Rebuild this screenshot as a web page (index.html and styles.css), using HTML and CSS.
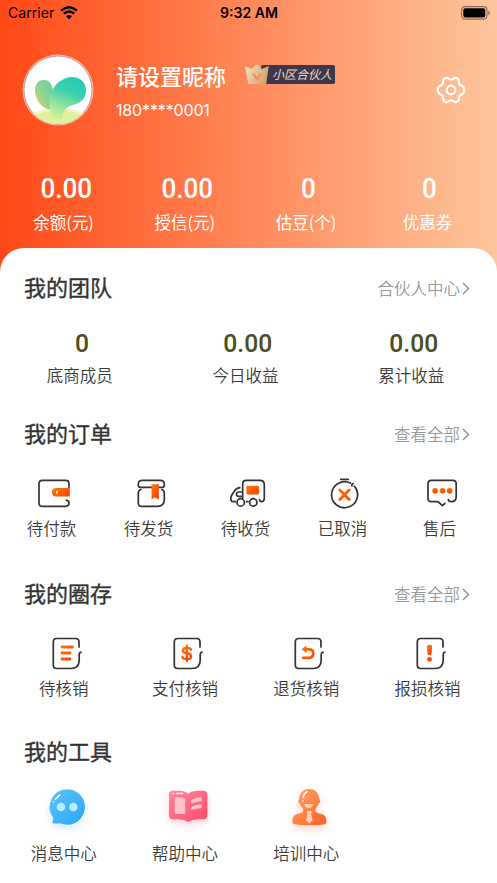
FILE: index.html
```html
<!DOCTYPE html>
<html lang="zh-CN">
<head>
<meta charset="utf-8">
<title>我的</title>
<link rel="stylesheet" href="styles.css">
</head>
<body>
<svg class="defs" width="0" height="0" aria-hidden="true">
  <defs>
    <linearGradient id="or" x1="0" y1="0" x2="1" y2="1"><stop offset="0" stop-color="#ff7a00"/><stop offset="1" stop-color="#ff3d00"/></linearGradient>
    <linearGradient id="oru" gradientUnits="userSpaceOnUse" x1="10" y1="10" x2="26" y2="27"><stop offset="0" stop-color="#ff7a00"/><stop offset="1" stop-color="#ff3d00"/></linearGradient>
    <path id="doc" class="ln" d="M31 12V7q0-3.500-3.500-3.500h-18.700Q5.300 3.500 5.300 7v23q0 3.500 3.500 3.500H23q8.200 0 8.200-8.200V19.500q0-2 1.800-2.400"/>
  </defs>
</svg>
<div class="screen">
  <header class="header">
    <div class="status">
      <div class="carrier"><span>Carrier</span>
        <svg width="18" height="14" viewBox="0 0 18 14" fill="none" stroke="#000" stroke-width="2.300"><path d="M1 4.600Q9-2.200 17 4.600"/><path d="M3.800 7.700Q9 3.400 14.200 7.700"/><path d="M9 13.400 6.100 10.300Q9 7.900 11.900 10.300Z" fill="#000" stroke="none"/></svg>
      </div>
      <div class="time">9:32 AM</div>
      <svg class="battery" width="29" height="14" viewBox="0 0 29 14"><rect x=".6" y=".6" width="25.400" height="12.500" rx="3.500" fill="none" stroke="#000" stroke-opacity=".45" stroke-width="1.100"/><rect x="2.300" y="2.300" width="22" height="9.100" rx="2" fill="#000"/><path d="M27.300 4.700q1.500.6 1.500 2.200t-1.500 2.200z" fill-opacity=".5"/></svg>
    </div>
    <div class="profile">
      <svg class="avatar" width="72" height="72" viewBox="0 0 72 72">
        <defs>
          <clipPath id="av"><circle cx="36" cy="36" r="34"/></clipPath>
          <linearGradient id="g1" x1="1" y1="0" x2="0" y2="1"><stop offset="0" stop-color="#61d2a2"/><stop offset=".5" stop-color="#8bd391"/><stop offset="1" stop-color="#f3d36b"/></linearGradient>
          <linearGradient id="g2" x1=".55" y1="0" x2=".2" y2="1"><stop offset="0" stop-color="#2accb6"/><stop offset=".3" stop-color="#38cfae"/><stop offset=".72" stop-color="#9de79a"/><stop offset="1" stop-color="#d2f299"/></linearGradient>
        </defs>
        <circle cx="36" cy="36" r="35.500" fill="#fff" fill-opacity=".55"/>
        <circle cx="36" cy="36" r="34" fill="#fff" stroke="#a893a8" stroke-width=".8"/>
        <g clip-path="url(#av)">
          <ellipse cx="36" cy="69" rx="35" ry="15" fill="#f4f4bd"/>
          <ellipse cx="36" cy="71" rx="29" ry="15" fill="#dff09e"/>
          <path d="M29 56C19 54 13 46 13 36c0-7 4-10 9-10 6 0 9 6 9 14z" fill="url(#g1)"/>
          <path d="M31 65C28.500 56 25 46 29 38.500 33 30 41 23 50 23c9 0 14 6 14 13 0 8-4 12.500-13 15-7 2-9.500 5-11 14z" fill="url(#g2)"/>
        </g>
      </svg>
      <div class="who">
        <div class="name-row">
          <span class="name">请设置昵称</span>
          <span class="badge">
            <svg width="24" height="21" viewBox="0 0 24 21"><defs><linearGradient id="gold" x1="0" y1="0" x2="1" y2=".4"><stop offset="0" stop-color="#f7e4c4"/><stop offset="1" stop-color="#d0a86c"/></linearGradient></defs><path d="M0 2.200 6.500 5 12 .3 17 5l6.700-3-2.500 18H3.200z" fill="url(#gold)"/><path d="m8.300 10 3.700 5 3.900-5" fill="none" stroke="#ff8a5f" stroke-width="2.400"/></svg>
            <span class="badge-text">小区合伙人</span>
          </span>
        </div>
        <div class="phone">180****0001</div>
      </div>
      <svg class="gear" width="30" height="28" viewBox="0 0 30 28" fill="none" stroke="#fff" stroke-width="2.200" stroke-linejoin="round"><path d="M9.500 2Q11 1.400 12.200 2.500 15 4.700 17.800 2.500 19 1.400 20.500 2 23 3 22.900 5.500 22.700 9 26 9.800 28 10.700 28.300 14 28 17.300 26 18.200 22.700 19 22.900 22.500 23 25 20.500 26 19 26.600 17.800 25.500 15 23.300 12.200 25.500 11 26.600 9.500 26 7 25 7.100 22.500 7.300 19 4 18.200 2 17.300 1.700 14 2 10.700 4 9.800 7.300 9 7.100 5.500 7 3 9.500 2Z"/><circle cx="15" cy="14" r="4.300"/></svg>
    </div>
    <div class="stats">
      <div class="cell"><b>0.00</b><span>余额(元)</span></div>
      <div class="cell"><b>0.00</b><span>授信(元)</span></div>
      <div class="cell"><b>0</b><span>估豆(个)</span></div>
      <div class="cell"><b>0</b><span>优惠券</span></div>
    </div>
  </header>

  <main class="sheet">
    <section class="team">
      <div class="head"><h2>我的团队</h2><a>合伙人中心<svg width="8" height="13" viewBox="0 0 8 13"><path d="m1 1 5.500 5.500L1 12"/></svg></a></div>
      <div class="row three">
        <div class="cell"><b>0</b><span>底商成员</span></div>
        <div class="cell"><b>0.00</b><span>今日收益</span></div>
        <div class="cell"><b>0.00</b><span>累计收益</span></div>
      </div>
    </section>

    <section class="orders">
      <div class="head"><h2>我的订单</h2><a>查看全部<svg width="8" height="13" viewBox="0 0 8 13"><path d="m1 1 5.500 5.500L1 12"/></svg></a></div>
      <div class="row five">
        <div class="cell"><svg class="ic" viewBox="0 0 36 36"><path class="ln" d="M30.200 25.200q2.800.3 2.800 3.100t-3.400 3.100H6.400Q3 31.400 3 28V8.800q0-3.400 3.400-3.400h23.200q3.400 0 3.400 3.400v3.500"/><path d="M33.800 13v8.400H20a4.200 4.200 0 0 1 0-8.400z" fill="url(#or)"/><rect x="20" y="15.700" width="1.900" height="3.200" rx=".9" fill="#fff"/></svg><span>待付款</span></div>
        <div class="cell"><svg class="ic" viewBox="0 0 36 36"><path class="ln" d="M18.500 12.300H7.300q-2 0-2-2V9.400q0-4 4-4h18q4 0 4 4v.9q0 2-2 2H26M8 14.500q-2.700.5-2.700 3.500v10q0 3.400 3.400 3.400h15.800q6.800 0 6.800-6.800V18q0-3-2.600-3.500"/><path d="M18.500 9.200h7.400v15.300l-3.700-2.100-3.700 2.100z" fill="url(#or)"/></svg><span>待发货</span></div>
        <div class="cell"><svg class="ic" viewBox="0 0 36 36"><path class="ln" d="M16.500 26.700h1.500M12.700 23V8.800q0-3.400 3.400-3.400h13.800q4.400 0 4.400 4.400v13.500q0 3.400-3 3.400-1.500 0-1.700-2M9.800 12.600q-3.500.3-5.300 3.400L2 19.700q-1.200 2-1.200 4.300 0 2.700 2.700 2.700h1.700M12 17H8.700q-2.200 0-2.200 2.200t2.200 2.200H12"/><circle class="ln" cx="10.700" cy="27.400" r="3.700"/><circle class="ln" cx="23.300" cy="27.400" r="3.700"/><rect x="16.400" y="10.700" width="12.700" height="8.700" rx="1.600" fill="url(#or)"/></svg><span>待收货</span></div>
        <div class="cell"><svg class="ic" viewBox="0 0 36 36"><path class="ln" d="M13.700 4.300h7.600M23.400 8.100a13 13 0 1 0 4 3.100M26.200 8.500q-1.800.3-1.200 2.500"/><path d="m12.800 15 9.400 9.400m0-9.400-9.400 9.400" fill="none" stroke="url(#oru)" stroke-width="2.800" stroke-linecap="round"/></svg><span>已取消</span></div>
        <div class="cell"><svg class="ic" viewBox="0 0 36 36"><path class="ln" d="M21 28.500l-2.700 2.200-4.200-4H7.400Q4 26.700 4 23.300V8.800q0-3.400 3.400-3.400h21.400q3.400 0 3.400 3.400v12.600q0 5.200-4.700 5.200-3 0-3.200-2"/><g fill="url(#or)"><circle cx="11" cy="15.700" r="2.800"/><circle cx="18.500" cy="15.700" r="2.800"/><circle cx="25.600" cy="15.700" r="2.800"/></g></svg><span>售后</span></div>
      </div>
    </section>

    <section class="writeoff">
      <div class="head"><h2>我的圈存</h2><a>查看全部<svg width="8" height="13" viewBox="0 0 8 13"><path d="m1 1 5.500 5.500L1 12"/></svg></a></div>
      <div class="row four">
        <div class="cell"><svg class="ic" viewBox="0 0 36 36"><use href="#doc"/><path d="M14 12 24.500 12.010M14 18 22 18.010M14 24 22 24.010" fill="none" stroke="url(#oru)" stroke-width="2.800" stroke-linecap="round"/></svg><span>待核销</span></div>
        <div class="cell"><svg class="ic" viewBox="0 0 36 36"><use href="#doc"/><path d="M22 14.600q-.8-1.700-4.200-1.700-3.900 0-3.900 2.700 0 2.200 3.900 2.700 4.200.4 4.200 3.100 0 2.700-4.200 2.700-3.600 0-4.400-2M17.800 10.800v15.400" fill="none" stroke="url(#oru)" stroke-width="2.400" stroke-linecap="round"/></svg><span>支付核销</span></div>
        <div class="cell"><svg class="ic" viewBox="0 0 36 36"><use href="#doc"/><path d="M15 14.300h4.200q4 0 4 4.200t-4 4.300h-6" fill="none" stroke="url(#oru)" stroke-width="2.700" stroke-linecap="round"/><path d="m11.500 14.300 5-3.700v7.400z" fill="#ff6a00"/></svg><span>退货核销</span></div>
        <div class="cell"><svg class="ic" viewBox="0 0 36 36"><use href="#doc"/><path d="M15 12q0-2.300 2.500-2.300T20 12l-.4 6.500q-.2 1.800-2.100 1.800t-2.100-1.800z" fill="url(#or)"/><circle cx="17.500" cy="24.300" r="2.400" fill="#ff4800"/></svg><span>报损核销</span></div>
      </div>
    </section>

    <section class="tools">
      <div class="head"><h2>我的工具</h2></div>
      <div class="row four">
        <div class="cell"><svg class="tool blue" viewBox="0 0 48 48"><defs><linearGradient id="bl" x1="0" y1="0" x2="1" y2="1"><stop offset="0" stop-color="#5bc5f5"/><stop offset="1" stop-color="#2ba5fb"/></linearGradient></defs><path d="M24.300 6.300a17.700 17.700 0 1 1-7 34q-3 .5-6.500.2-2 0-1.200-1.800.8-2 .7-4A17.700 17.700 0 0 1 24.300 6.300z" fill="url(#bl)"/><circle cx="18" cy="24" r="4.300" fill="#b9ecff"/><circle cx="30.400" cy="24" r="4.300" fill="#b9ecff"/><path d="m12.500 16.300 4.200-4.300M10.700 18.700v.1" fill="none" stroke="#fff" stroke-width="1.500" stroke-linecap="round"/></svg><span>消息中心</span></div>
        <div class="cell"><svg class="tool pink" viewBox="0 0 48 48"><defs><linearGradient id="pk" x1="0" y1="0" x2="1" y2="1"><stop offset="0" stop-color="#ff8a9e"/><stop offset="1" stop-color="#ff4a68"/></linearGradient></defs><path d="M9 7.700h6q5.500 0 9.200 3 3.700-3 9.200-3h6q4 0 4 4v20.500q0 4-4 4h-5q-6 0-10.200 2.500-4.200-2.500-10.200-2.500H9q-4 0-4-4V11.700q0-4 4-4z" fill="url(#pk)"/><path d="M12.200 14.300q4.500 0 8 .9 1 .3 1 1.300v14.600h-9q-1.400 0-1.400-1.400V15.700q0-1.400 1.400-1.400zM27.200 18q0-1.100 1-1.600 3.800-1.900 8.600-2.100 1 0 1 1v2.100q0 .8-.9.900-4.300.4-8.500 1.900-1.200.4-1.200-.8zM27.200 25q0-1.100 1-1.600 3.800-1.900 8.600-2.100 1 0 1 1v2.100q0 .8-.9.900-4.300.4-8.500 1.500-1.200.4-1.200-.8z" fill="#ffc2cb"/><path d="M12.700 10.500h6M9.200 10.600v.1" fill="none" stroke="#fff" stroke-width="1.500" stroke-linecap="round"/></svg><span>帮助中心</span></div>
        <div class="cell"><svg class="tool orange" viewBox="0 0 48 48"><defs><linearGradient id="mn" x1="0" y1="0" x2="1" y2="1"><stop offset="0" stop-color="#ffa066"/><stop offset=".5" stop-color="#ff8549"/><stop offset="1" stop-color="#ff5e23"/></linearGradient></defs><path d="M24.200 6c6.500 0 9.800 4.800 9.800 9.300 1.600 2 1.500 4-.4 5.200-.6 3-3.300 4.300-3.500 6.200-.2 2.500 2.500 3.300 5.500 4 4.600 1 5.900 3.400 5.900 8 0 2.500-2 3.300-17.300 3.300S7.300 41.200 7.300 38.700c0-4.600 1.300-7 5.900-8 3-.7 5.300-1.500 5.100-4-.2-1.900-3-3.200-3.500-6.200-1.900-1.200-2-3.200-.4-5.200 0-4.500 3.300-9.300 9.800-9.300z" fill="url(#mn)"/><path d="M19.300 21h9q-.5 4-4.500 4t-4.500-4zM22.400 28h3.800l.8 1-1 1.800 1.600 6.500-3.300 3.200-3.300-3.200 1.600-6.500-1-1.800z" fill="#ffd0b0"/><path d="M18.200 14.600q.4-3.800 3.500-5.700M17.900 17.800v.1" fill="none" stroke="#fff" stroke-width="1.600" stroke-linecap="round"/></svg><span>培训中心</span></div>
      </div>
    </section>
  </main>
</div>
</body>
</html>
```
FILE: styles.css
```css
* { box-sizing: border-box; }
body {
  margin: 0;
  font-family: "Noto Sans CJK SC", sans-serif;
  color: #333;
  background: #fff;
}
.defs { position: absolute; }
.screen {
  height: 883px;
  overflow: hidden;
  background: linear-gradient(90deg, #ff4916 0, #ff885a 50%, #ffc69d 100%) 0 0 / 100% 300px no-repeat;
}
.header { height: 248px; color: #fff; }

.status {
  display: grid;
  grid-template-columns: 1fr auto 1fr;
  align-items: center;
  height: 26px;
  padding: 0 7px 0 8px;
  color: #000;
  font: 14.1px/26px Inter, sans-serif;
}
.carrier { display: flex; align-items: center; gap: 6px; }
.time { font-weight: 600; }
.battery { justify-self: end; }

.profile { display: flex; height: 128px; padding: 28px 31px 0 22px; }
.avatar { flex: none; }
.who { flex: 1; padding: 5px 0 0 22px; }
.name-row { display: flex; height: 32px; }
.name { font-size: 22px; line-height: 32px; font-weight: 500; }
.badge { display: flex; height: 21px; margin: 5px 0 0 19px; }
.badge svg { position: relative; z-index: 1; margin-right: -8px; }
.badge-text {
  height: 19px;
  margin-top: 1px;
  padding: 0 3px 0 11px;
  border-radius: 2px;
  background: #3b374f;
  color: #f0d9b2;
  font-size: 12px;
  line-height: 18px;
  font-style: italic;
  white-space: nowrap;
}
.phone { font: 16px/24px Inter, sans-serif; letter-spacing: -.15px; margin-top: 7px; }
.gear { margin-top: 22px; flex: none; }

.cell { display: flex; flex-direction: column; align-items: center; }
.cell span {
  font-size: 16.5px;
  line-height: 24px;
  padding-right: 6px;
  white-space: nowrap;
}
.row .cell span { font-weight: 350; color: #3c3c3c; }
.cell b { font-family: Roboto, sans-serif; font-weight: 500; line-height: 28px; }
.stats { display: grid; grid-template-columns: repeat(4, 1fr); padding: 21px 6px 0; }
.stats b { font-size: 28px; transform: translateX(-.5px) scaleX(.93); }
.stats span { margin-top: 7px; }

.sheet {
  height: 635px;
  padding-top: 24px;
  border-radius: 24px 24px 0 0;
  background: #fff;
}
.head {
  display: flex;
  justify-content: space-between;
  align-items: center;
  height: 32px;
  padding: 0 27px 0 24px;
}
h2 {
  margin: 0;
  padding-bottom: 3px;
  font-size: 22px;
  line-height: 29px;
  font-weight: 400;
  -webkit-text-stroke: .35px #333;
}
.head a { display: flex; align-items: center; gap: 2px; color: #999; font-size: 16.5px; line-height: 24px; font-weight: 350; }
.head a path { fill: none; stroke: #888; stroke-width: 1.3; }

.row { display: grid; padding: 0 6px; }
.three { grid-template-columns: repeat(3, 1fr); padding: 25px 0 0; }
.four { grid-template-columns: repeat(4, 1fr); }
.five { grid-template-columns: repeat(5, 1fr); }
.three b { font-size: 26.5px; color: #4a4d26; transform: translateX(-.5px) scaleX(.93); }
.three span { margin-top: 6px; }

.orders { margin-top: 31px; }
.writeoff { margin-top: 38px; }
.tools { margin-top: 36px; }
.orders .row, .writeoff .row { padding-top: 25px; }
.tools .row { padding-top: 15px; }
.ic { width: 36px; height: 36px; margin: 0 1.4px 5px 0; }
.ln { fill: none; stroke: #333; stroke-width: 1.7; stroke-linecap: round; stroke-linejoin: round; }
.tool { width: 48px; height: 48px; margin-bottom: 10px; overflow: visible; }
.blue { filter: drop-shadow(0 4px 4px rgba(50, 150, 255, .2)); }
.pink { filter: drop-shadow(0 4px 4px rgba(255, 80, 110, .25)); }
.orange { filter: drop-shadow(0 4px 4px rgba(255, 100, 40, .25)); }
```
